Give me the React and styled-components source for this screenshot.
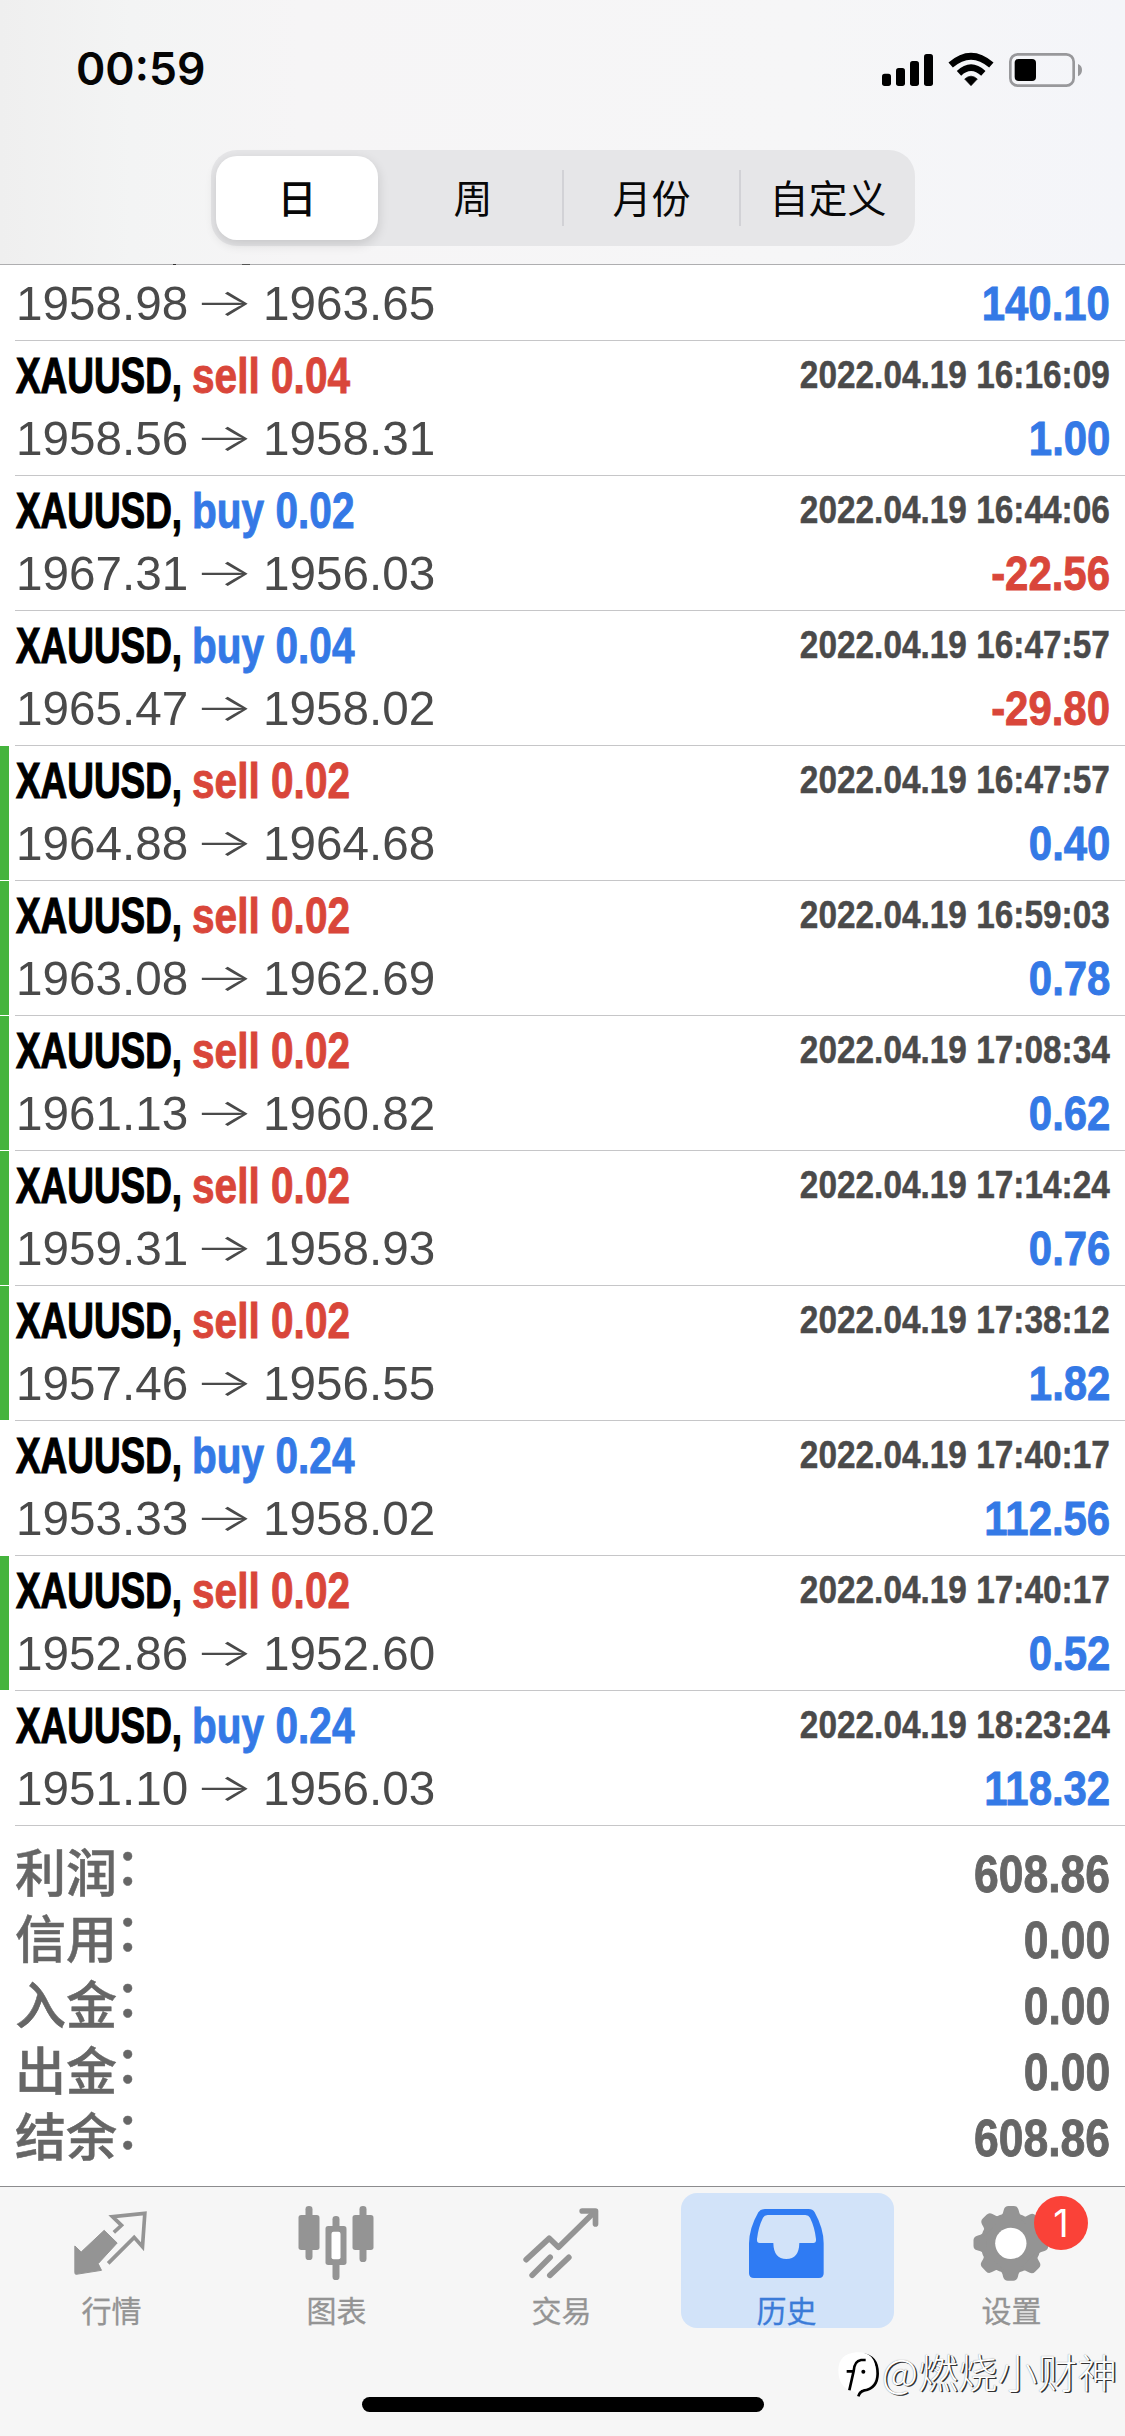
import React from "react";
import styled, { createGlobalStyle } from "styled-components";

const latin = `"Liberation Sans", Arial, "Noto Sans CJK SC", sans-serif`;
const han = `"Noto Sans CJK SC", "Liberation Sans", sans-serif`;
const RED = "#d9463a";
const BLUE = "#3479e6";
const GREY = "#949494";

const GlobalStyle = createGlobalStyle`
  * { box-sizing: border-box; }
  body { margin: 0; background: #fff; }
`;

const Screen = styled.div`
  position: relative;
  display: flex;
  flex-direction: column;
  width: 1125px;
  height: 2436px;
  overflow: hidden;
  background: #fff;
  font-family: ${latin};
`;

const Header = styled.header`
  flex: none;
  height: 264px;
  background: linear-gradient(90deg, #efefef 0, #f3f4f4 130px, #f6f5f6 300px, #f6f6f7 800px, #f4f5f9 1125px);
`;

const StatusBar = styled.div`
  display: flex;
  justify-content: space-between;
  align-items: center;
  height: 138px;
  padding: 0 38px 0 76px;
`;

const Clock = styled.span`
  font: 600 44.5px/60px Inter, sans-serif;
  color: #050505;
`;

const Segments = styled.div`
  display: grid;
  grid-template-columns: 173px 178px 177px 176px;
  width: 704px;
  height: 96px;
  margin: 12px 0 0 211px;
  padding: 6px 0;
  border-radius: 26px;
  background: #e6e6e8;
`;

const Segment = styled.button`
  display: flex;
  align-items: center;
  justify-content: center;
  border: 0;
  margin: ${(p) => (p.$active ? "0 6px 0 5px" : "14px 0")};
  padding: 0 0 4px 0;
  border-left: ${(p) => (p.$divided ? "2px solid #d2d2d6" : "0")};
  border-radius: ${(p) => (p.$active ? "21px" : "0")};
  background: ${(p) => (p.$active ? "#fff" : "transparent")};
  box-shadow: ${(p) => (p.$active ? "0 4px 12px rgba(0,0,0,.14)" : "none")};
  font: ${(p) => (p.$active ? 500 : 400)} 39px/50px ${han};
  color: #080808;
`;

/* The rule under the header, with the tips of two descenders scrolled beneath it. */
const HeaderRule = styled.div`
  flex: none;
  height: 1px;
  background: linear-gradient(90deg, #aeaeb0 173px, #333 173px 176px, #aeaeb0 176px 242px, #555 242px 250px, #aeaeb0 250px);
`;

const List = styled.main`
  flex: none;
  height: 1921px;
`;

const RowBox = styled.div`
  display: grid;
  grid-template-columns: 9px 1fr;
  column-gap: 6px;
  height: ${(p) => (p.$short ? "76px" : "135px")};
`;

const Marker = styled.div`
  margin-bottom: 1px;
  background: ${(p) => (p.$on ? "#45b43d" : "transparent")};
`;

const RowBody = styled.div`
  border-bottom: 1px solid #c6c6c8;
  padding: ${(p) => (p.$short ? "8px" : "0")} 15px 0 1px;
`;

const Line = styled.div`
  display: flex;
  justify-content: space-between;
  height: ${(p) => p.$h}px;
  line-height: ${(p) => p.$h}px;
  white-space: nowrap;
`;

const Deal = styled.div`
  display: flex;
  padding-top: 1.5px;
  font-size: 50px;
  font-weight: 700;
`;

const Symbol = styled.span`
  width: 176px;
  color: #000;
  transform: scaleX(0.738);
  transform-origin: left;
  -webkit-text-stroke: 1.2px currentColor;
`;

const Side = styled.span`
  color: ${(p) => p.$color};
  transform: scaleX(0.812);
  transform-origin: left;
  -webkit-text-stroke: 0.9px currentColor;
`;

const Time = styled.span`
  font-size: 39.5px;
  font-weight: 700;
  color: #4a4a4a;
  transform: scaleX(0.845);
  transform-origin: right;
  -webkit-text-stroke: 0.5px currentColor;
`;

const Prices = styled.div`
  display: flex;
  font-size: 48.5px;
  color: #4a4a4a;
`;

const Price = styled.span`
  width: 174px;
  transform: scaleX(0.982);
  transform-origin: left;
`;

const Arrow = styled.span`
  width: 73px;
  padding-right: 3px;
  text-align: center;
  font: 300 38px/58px Inter, "DejaVu Sans", sans-serif;
  transform: scaleX(1.65);
`;

const Amount = styled.span`
  font-size: 49px;
  font-weight: 700;
  color: ${(p) => (p.$loss ? RED : BLUE)};
  transform: scaleX(0.855);
  transform-origin: right;
  -webkit-text-stroke: 0.9px currentColor;
`;

const Summary = styled.section`
  padding: 15px 15px 0 15px;
`;

const Label = styled.span`
  display: flex;
  margin-top: 1px;
  font: 500 51px/66px ${latin};
  color: #666;
  -webkit-text-stroke: 0.5px currentColor;
`;

const Colon = styled.span`
  margin: -7px 0 0 -2px;
`;

const Total = styled.span`
  font-size: 52px;
  font-weight: 700;
  color: #666;
  transform: scaleX(0.855);
  transform-origin: right;
  -webkit-text-stroke: 0.9px currentColor;
`;

const TabBar = styled.nav`
  flex: none;
  display: grid;
  grid-template-columns: repeat(5, 225px);
  height: 250px;
  border-top: 1px solid #8c8c8e;
  background: #f6f6f6;
`;

const Tab = styled.div`
  position: relative;
  display: flex;
  flex-direction: column;
  align-items: center;
  width: 213px;
  height: 135px;
  margin: 6px 6px 0;
  padding: 3px 1px 0 0;
  border-radius: 16px;
  background: ${(p) => (p.$active ? "#d2e3f9" : "transparent")};
  color: ${(p) => (p.$active ? "#3b7bd8" : GREY)};
  svg { display: block; }
`;

const TabLabel = styled.span`
  margin: 10px 1px 0 0;
  font: 400 30px/36px ${han};
  -webkit-text-stroke: 0.3px currentColor;
`;

const Badge = styled.span`
  position: absolute;
  left: 128px;
  top: 3px;
  width: 54px;
  height: 54px;
  border-radius: 50%;
  background: #fa4238;
  color: #fff;
  text-align: center;
  font: 400 38px/54px Inter, sans-serif;
`;

const HomeIndicator = styled.div`
  position: absolute;
  left: 362px;
  top: 2397px;
  width: 402px;
  height: 15px;
  border-radius: 8px;
  background: #000;
`;

const Watermark = styled.div`
  position: absolute;
  right: 8px;
  top: 2344px;
  display: flex;
  align-items: center;
  gap: 1px;
  font: 300 39.8px/50px ${han};
  color: #fff;
  text-shadow: 1.5px 1px 0 #333, 0 0 1px #777;
  svg { margin-top: 6px; }
`;

const StatusIcons = () => (
  <svg width="207" height="37" viewBox="60 30 621 111">
    <rect x="66" y="98" width="27" height="37" rx="8" />
    <rect x="108" y="81" width="27" height="54" rx="8" />
    <rect x="150" y="60" width="27" height="75" rx="8" />
    <rect x="192" y="39" width="27" height="96" rx="8" />
    <path d="M333 134 L314 114 Q333 97 352 114 Z" strokeLinejoin="round" stroke="#000" strokeWidth="2" />
    <path d="M297 97 Q333 63 370 97" fill="none" stroke="#000" strokeWidth="19" />
    <path d="M272 72 Q333 19 394 72" fill="none" stroke="#000" strokeWidth="20" />
    <rect x="451" y="40" width="190" height="94" rx="22" fill="none" stroke="#98989b" strokeWidth="8" />
    <rect x="464" y="54" width="64" height="66" rx="12" />
    <path d="M654 69 Q666 74 666 87 Q666 100 654 106 Z" fill="#98989b" />
  </svg>
);

const QuotesIcon = () => (
  <svg width="90" height="85" viewBox="202.5 78 270 255" fill={GREY}>
    <path d="M226 228 L245 246 L314 181 L353 219 L296 281 L306 301 L230 313 Q226 313 226 308 Z" stroke={GREY} strokeWidth="3" strokeLinejoin="round" />
    <path d="M343 187 L366 166 L339 140 L436 130 L429 230 L404 202 L326 280" fill="none" stroke={GREY} strokeWidth="11" />
  </svg>
);

const ChartIcon = () => (
  <svg width="90" height="85" viewBox="877.5 78 270 255" fill={GREY}>
    <rect x="918" y="108" width="21" height="162" rx="10" />
    <rect x="897" y="135" width="63" height="105" rx="8" />
    <rect x="1080" y="108" width="21" height="168" rx="10" />
    <rect x="1059" y="135" width="63" height="105" rx="8" />
    <rect x="999" y="138" width="21" height="192" rx="10" />
    <rect x="978" y="168" width="63" height="117" rx="8" />
    <rect x="996" y="185" width="27" height="83" rx="6" fill="#fff" />
  </svg>
);

const TradeIcon = () => (
  <svg width="90" height="85" viewBox="352.5 78 270 255" fill="none" stroke={GREY} strokeWidth="17" strokeLinecap="round" strokeLinejoin="round">
    <path d="M380 269 L449 205 L477 232 L584 127" />
    <path d="M548 123 H588 V162" />
    <path d="M398 316 L452 262 M451 316 L508 262" />
  </svg>
);

const HistoryIcon = () => (
  <svg width="90" height="85" viewBox="-24 78 270 255">
    <path fillRule="evenodd" fill="#2f7bf3" d="M45 117 H176 Q188 117 194 127 Q221 176 221 220 V310 Q221 324 207 324 H12 Q-3 324 -3 310 V220 Q-2 174 25 127 Q31 117 45 117 Z M53 135 Q43 135 39 143 Q25 171 21 207 Q20 219 29 219 H70 Q71 267 109 267 Q147 267 148 219 H190 Q199 219 198 207 Q194 171 180 143 Q176 135 166 135 Z" />
  </svg>
);

const gearTeeth = Array.from({ length: 8 }, (_, i) => i * 45);
const GearIcon = () => (
  <svg width="90" height="85" viewBox="652.5 78 270 255" fill={GREY}>
    <circle cx="784" cy="220" r="91" />
    {gearTeeth.map((a) => (
      <path key={a} transform={`rotate(${a} 784 220)`} d="M744 148 Q759 140 763 119 Q766 108 777 108 H793 Q804 108 807 119 Q811 140 826 148 Z" />
    ))}
    <circle cx="784" cy="220" r="47" fill="#fff" />
  </svg>
);

const WatermarkLogo = () => (
  <svg width="44" height="48" viewBox="108 66 132 144">
    <path d="M172 205 Q176 190 190 187 Q229 181 230 137 Q230 84 183 79" fill="none" stroke="#000" strokeWidth="8" />
    <path d="M165 73 Q224 69 224 130 Q224 176 188 183 Q174 187 168 198 Q162 190 148 187 Q112 175 112 126 Q113 78 165 73 Z" fill="#fff" />
    <path d="M194 96 H180 Q160 99 158 129 L145 187 M137 130 H160" fill="none" stroke="#000" strokeWidth="8" />
    <circle cx="187" cy="131" r="6" />
  </svg>
);

const deals = [
  ["sell", "0.04", "2022.04.19 16:16:09", "1958.56", "1958.31", "1.00"],
  ["buy", "0.02", "2022.04.19 16:44:06", "1967.31", "1956.03", "-22.56"],
  ["buy", "0.04", "2022.04.19 16:47:57", "1965.47", "1958.02", "-29.80"],
  ["sell", "0.02", "2022.04.19 16:47:57", "1964.88", "1964.68", "0.40", true],
  ["sell", "0.02", "2022.04.19 16:59:03", "1963.08", "1962.69", "0.78", true],
  ["sell", "0.02", "2022.04.19 17:08:34", "1961.13", "1960.82", "0.62", true],
  ["sell", "0.02", "2022.04.19 17:14:24", "1959.31", "1958.93", "0.76", true],
  ["sell", "0.02", "2022.04.19 17:38:12", "1957.46", "1956.55", "1.82", true],
  ["buy", "0.24", "2022.04.19 17:40:17", "1953.33", "1958.02", "112.56"],
  ["sell", "0.02", "2022.04.19 17:40:17", "1952.86", "1952.60", "0.52", true],
  ["buy", "0.24", "2022.04.19 18:23:24", "1951.10", "1956.03", "118.32"],
];

const totals = [
  ["利润", "608.86"],
  ["信用", "0.00"],
  ["入金", "0.00"],
  ["出金", "0.00"],
  ["结余", "608.86"],
];

const tabs = [
  ["行情", QuotesIcon],
  ["图表", ChartIcon],
  ["交易", TradeIcon],
  ["历史", HistoryIcon],
  ["设置", GearIcon],
];

const PriceLine = ({ from, to, amount }) => (
  <Line $h={60}>
    <Prices>
      <Price>{from}</Price>
      <Arrow>→</Arrow>
      <Price>{to}</Price>
    </Prices>
    <Amount $loss={amount.startsWith("-")}>{amount}</Amount>
  </Line>
);

const DealRow = ({ deal: [side, volume, time, from, to, amount, marked] }) => (
  <RowBox>
    <Marker $on={marked} />
    <RowBody>
      <Line $h={67}>
        <Deal>
          <Symbol>XAUUSD,</Symbol>
          <Side $color={side === "buy" ? BLUE : RED}>{side} {volume}</Side>
        </Deal>
        <Time>{time}</Time>
      </Line>
      <PriceLine from={from} to={to} amount={amount} />
    </RowBody>
  </RowBox>
);

export default function App() {
  return (
    <Screen>
      <GlobalStyle />
      <Header>
        <StatusBar>
          <Clock>00:59</Clock>
          <StatusIcons />
        </StatusBar>
        <Segments>
          <Segment $active>日</Segment>
          <Segment>周</Segment>
          <Segment $divided>月份</Segment>
          <Segment $divided>自定义</Segment>
        </Segments>
      </Header>
      <HeaderRule />
      <List>
        <RowBox $short>
          <Marker />
          <RowBody $short>
            <PriceLine from="1958.98" to="1963.65" amount="140.10" />
          </RowBody>
        </RowBox>
        {deals.map((deal, i) => (
          <DealRow key={i} deal={deal} />
        ))}
        <Summary>
          {totals.map(([label, value]) => (
            <Line $h={66} key={label}>
              <Label>{label}<Colon>：</Colon></Label>
              <Total>{value}</Total>
            </Line>
          ))}
        </Summary>
      </List>
      <TabBar>
        {tabs.map(([label, Icon]) => (
          <Tab key={label} $active={label === "历史"}>
            <Icon />
            <TabLabel>{label}</TabLabel>
            {label === "设置" && <Badge>1</Badge>}
          </Tab>
        ))}
      </TabBar>
      <HomeIndicator />
      <Watermark>
        <WatermarkLogo />
        <span>@燃烧小财神</span>
      </Watermark>
    </Screen>
  );
}
